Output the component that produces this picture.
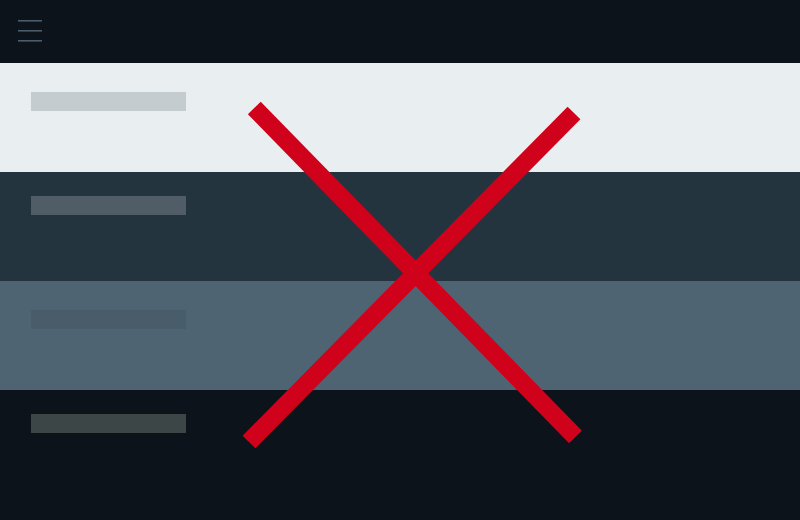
export default function App() {
  const sections = [
    { bg: "bg-[#e9eef1]", bar: "bg-[#c5cccf]", cls: "h-[109px] pt-[29px]" },
    { bg: "bg-[#23343f]", bar: "bg-[#505d66]", cls: "h-[109px] pt-[24px]" },
    { bg: "bg-[#4f6472]", bar: "bg-[#495c69]", cls: "h-[109px] pt-[29px]" },
    { bg: "bg-[#0c131a]", bar: "bg-[#3d4647]", cls: "h-[130px] pt-[24px]" },
  ];
  return (
    <div className="relative w-[800px] h-[520px] overflow-hidden bg-[#0c131a]" style={{ fontFamily: "'Liberation Sans', sans-serif" }}>
      <header className="h-[63px] pl-[18px] pt-[19px]">
        <svg width="24" height="24" viewBox="0 0 24 24" className="block">
          <g stroke="#4b5d6b" strokeWidth="1.6">
            <line x1="0" y1="1.8" x2="24" y2="1.8" />
            <line x1="0" y1="11.8" x2="24" y2="11.8" />
            <line x1="0" y1="21.8" x2="24" y2="21.8" />
          </g>
        </svg>
      </header>
      {sections.map((s, i) => (
        <section key={i} className={`${s.bg} ${s.cls} pl-[31px]`}>
          <div className={`${s.bar} w-[154.6px] h-[19px]`} />
        </section>
      ))}
      <svg className="absolute left-0 top-0 pointer-events-none" width="800" height="520" viewBox="0 0 800 520">
        <g stroke="#d0021b" strokeWidth="18" strokeLinecap="butt">
          <line x1="254.3" y1="108" x2="575.5" y2="437" />
          <line x1="574" y1="113" x2="249" y2="442" />
        </g>
      </svg>
    </div>
  );
}
